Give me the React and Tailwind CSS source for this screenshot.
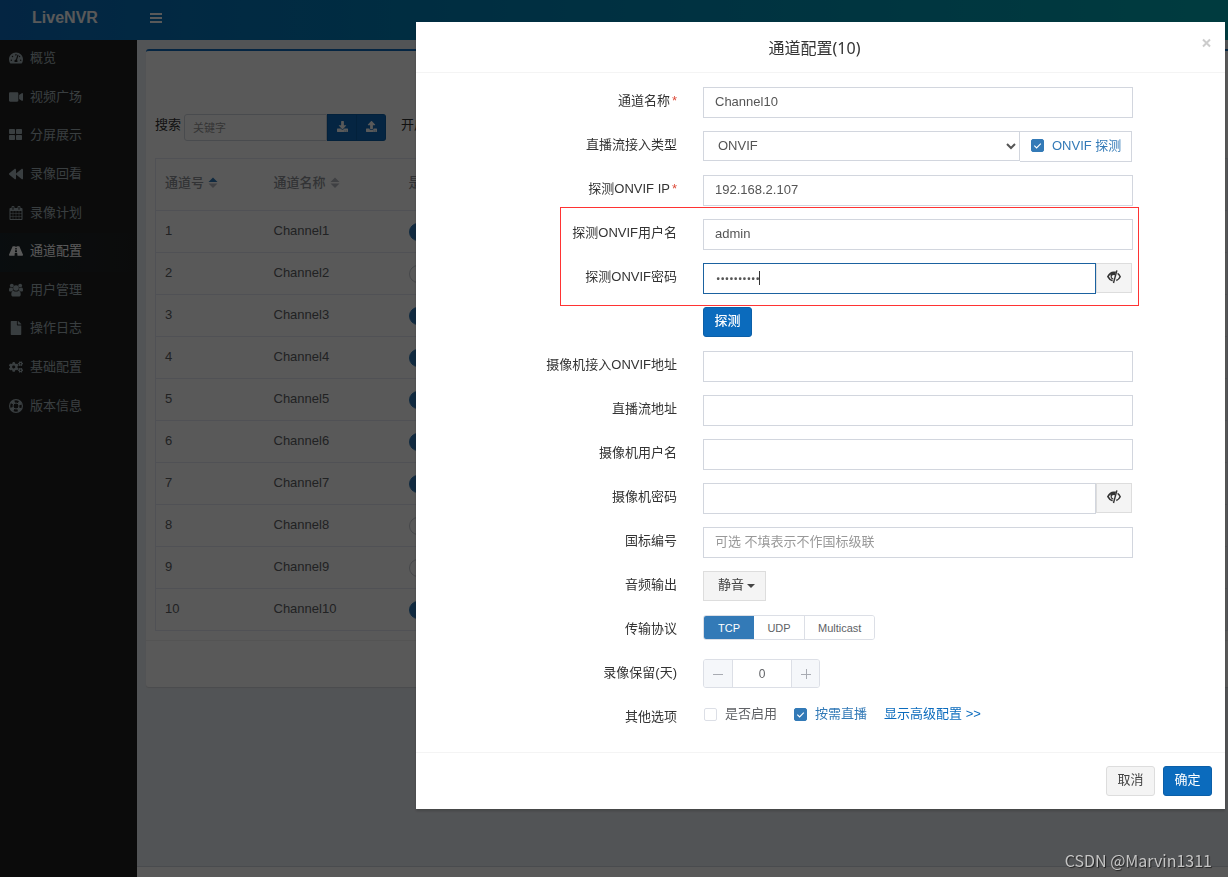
import React, { useState } from "react";
import {
  FaTachometerAlt, FaVideo, FaBackward, FaRoad, FaFile, FaCogs, FaDownload, FaUpload
} from "react-icons/fa";

const GridIcon = ({ className }) => (
  <svg viewBox="0 0 14 14" className={className} fill="currentColor" aria-hidden="true">
    <rect x="0" y="1" width="6" height="5" rx="0.8" />
    <rect x="7" y="1" width="6" height="5" rx="0.8" />
    <rect x="0" y="7" width="6" height="5" rx="0.8" />
    <rect x="7" y="7" width="6" height="5" rx="0.8" />
  </svg>
);

const CalendarIcon = ({ className }) => (
  <svg viewBox="0 0 1792 1792" className={className} fill="currentColor" aria-hidden="true">
    <path d="M192 1664h288v-288h-288v288zm352 0h320v-288h-320v288zm-352-352h288v-320h-288v320zm352 0h320v-320h-320v320zm-352-384h288v-288h-288v288zm736 736h320v-288h-320v288zm-384-736h320v-288h-320v288zm768 736h288v-288h-288v288zm-384-352h320v-320h-320v320zm-352-864v-288q0-13-9.5-22.5t-22.5-9.5h-64q-13 0-22.5 9.5t-9.5 22.5v288q0 13 9.5 22.5t22.5 9.5h64q13 0 22.5-9.5t9.5-22.5zm736 864h288v-320h-288v320zm-384-384h320v-288h-320v288zm384 0h288v-288h-288v288zm32-480v-288q0-13-9.5-22.5t-22.5-9.5h-64q-13 0-22.5 9.5t-9.5 22.5v288q0 13 9.5 22.5t22.5 9.5h64q13 0 22.5-9.5t9.5-22.5zm384-64v1280q0 52-38 90t-90 38h-1408q-52 0-90-38t-38-90v-1280q0-52 38-90t90-38h128v-96q0-66 47-113t113-47h64q66 0 113 47t47 113v96h384v-96q0-66 47-113t113-47h64q66 0 113 47t47 113v96h128q52 0 90 38t38 90z" />
  </svg>
);

const UsersIcon = ({ className }) => (
  <svg viewBox="0 0 14 14" className={className} fill="currentColor" aria-hidden="true">
    <circle cx="2.8" cy="2.6" r="1.9" />
    <circle cx="11.2" cy="2.6" r="1.9" />
    <circle cx="7" cy="5" r="2.8" />
    <path d="M0 7.2C0 5.4.5 4.5 1.3 4.5c.8.5 1.7.7 2.5.3-.1 1 .1 1.900.7 2.600-.9.1-1.600.5-2.100 1.100H1.300C.5 8.500 0 8 0 7.200z" />
    <path d="M14 7.2c0-1.800-.5-2.700-1.300-2.700-.8.500-1.700.700-2.500.300.100 1-.1 1.900-.7 2.600.9.100 1.600.5 2.100 1.100h1.100c.8 0 1.300-.5 1.300-1.300z" />
    <path d="M4.400 7.700c1.600 1.200 3.600 1.200 5.200 0 1.400.1 2.100 1.600 2.100 3.800 0 1.400-.8 2-2 2H4.300c-1.200 0-2-.6-2-2 0-2.200.7-3.700 2.100-3.800z" />
  </svg>
);

const LifeRingIcon = ({ className }) => (
  <svg viewBox="0 0 14 14" className={className} fill="none" stroke="currentColor" aria-hidden="true">
    <circle cx="7" cy="7" r="6.400" strokeWidth="1.200" />
    <circle cx="7" cy="7" r="3" strokeWidth="1" />
    <circle cx="7" cy="7" r="4.700" strokeWidth="3" strokeDasharray="3.400 3.982" strokeDashoffset="-1.991" />
  </svg>
);

const EyeCloseIcon = () => (
  <svg viewBox="0 0 14 14" className="size-3.5" fill="none" stroke="currentColor" aria-hidden="true">
    <path d="M8.4 2.6C4.6 1.8 2.2 4 .9 6.7c.8 1.7 2.3 3.4 4.7 4" strokeWidth="1.6" />
    <path d="M3.2 4.4C4.6 2.8 6.4 2 8.9 1.600L8 5.2 6 4.9 4.4 6.6z" fill="currentColor" stroke="none" />
    <path d="M4.2 5.4c-.4 1.9.4 3.2 2 3.7" strokeWidth="1.1" />
    <path d="M10.6 3.3c1.2.7 2 1.9 2.6 3.4-.8 1.7-2.1 3-3.9 3.8" strokeWidth="1.5" />
    <path d="M9.9.4 6.5 13" strokeWidth="1.4" />
  </svg>
);

const SortIcon = ({ active }) => (
  <svg viewBox="0 0 10 12" className="ml-1 inline-block h-3 w-2.5" aria-hidden="true">
    <path d="M5 0.5 9.5 5h-9z" fill={active ? "#337ab7" : "#b4b8c0"} />
    <path d="M5 11 .5 6.5h9z" fill="#b4b8c0" />
  </svg>
);

const MENU = [
  { text: "概览", Icon: FaTachometerAlt },
  { text: "视频广场", Icon: FaVideo },
  { text: "分屏展示", Icon: GridIcon },
  { text: "录像回看", Icon: FaBackward },
  { text: "录像计划", Icon: CalendarIcon },
  { text: "通道配置", Icon: FaRoad, active: true },
  { text: "用户管理", Icon: UsersIcon },
  { text: "操作日志", Icon: FaFile },
  { text: "基础配置", Icon: FaCogs },
  { text: "版本信息", Icon: LifeRingIcon },
];

const CHANNELS = [true, false, true, true, true, true, true, false, false, true];

const inputClass =
  "block h-[31px] w-full min-w-0 border border-[#d2d6de] bg-white pr-3 pb-0.5 pl-[11px] text-[13px] text-[#555] outline-none placeholder:text-[#999]";

const Row = ({ label, htmlFor, required, children }) => (
  <div className="mb-[13px] grid min-h-[31px] grid-cols-[261px_minmax(0,1fr)] gap-[26px] pr-[92px]">
    {label ? (
      <label htmlFor={htmlFor} className="pt-[5px] text-right leading-[18px] text-[#333]">
        {label}
        {required && <span className="ml-0.5 text-[#dd4b39]">*</span>}
      </label>
    ) : (
      <span />
    )}
    <div className="min-w-0">{children}</div>
  </div>
);

const CheckBox = ({ id, text, defaultChecked }) => (
  <label htmlFor={id} className="flex items-center gap-2 text-[#606266] has-checked:text-[#337ab7]">
    <span className="relative flex">
      <input
        id={id}
        type="checkbox"
        defaultChecked={defaultChecked}
        className="peer size-[13px] appearance-none rounded-xs border border-[#dcdfe6] bg-white checked:border-[#337ab7] checked:bg-[#337ab7]"
      />
      <svg viewBox="0 0 13 13" className="pointer-events-none absolute inset-0 hidden peer-checked:block" fill="none" stroke="#fff" aria-hidden="true">
        <path d="M3.3 6.7 5.6 9 9.8 4.6" strokeWidth="1.1" />
      </svg>
    </span>
    {text}
  </label>
);

const EyeButton = () => (
  <button type="button" aria-label="显示密码" className="flex h-[30px] w-9 shrink-0 justify-center border border-[#ddd] bg-[#f4f4f4] pt-1.5 text-[#333]">
    <EyeCloseIcon />
  </button>
);

const Sidebar = () => (
  <nav className="w-[137px] shrink-0 bg-[#222]">
    <ul className="flex h-[386px] flex-col">
      {MENU.map(({ text, Icon, active }) => (
        <li key={text} className="flex flex-1">
          <a
            href="#"
            className={`flex flex-1 items-center gap-[7px] pb-0.5 pl-[9px] ${active ? "bg-linear-to-r from-[#1c272b] to-[#222] text-white" : "text-[#a4b2b8]"}`}
          >
            <Icon className="size-3.5" />
            {text}
          </a>
        </li>
      ))}
    </ul>
  </nav>
);

const ChannelPanel = () => (
  <section className="mt-[9px] ml-[9px] rounded-l-[3px] border-t-2 border-[#0f6cbd] bg-white shadow-[0_1px_1px_rgba(0,0,0,0.1)]">
    <div className="pt-[63px] pb-[9px] pl-[9px]">
      <div className="mb-[17px] flex text-[#333]">
        <label htmlFor="keyword" className="mr-[3px] leading-[22px]">搜索</label>
        <input
          id="keyword"
          placeholder="关键字"
          className="h-[27px] w-[143px] rounded-l-[3px] border border-[#d2d6de] bg-white px-2 text-[11px] outline-none placeholder:text-[#999]"
        />
        <button type="button" aria-label="下载" className="flex h-[27px] w-[30px] items-center justify-center border border-[#0b5fa8] bg-[#0f6cbd] pb-0.5 text-white">
          <FaDownload className="size-[11px]" />
        </button>
        <button type="button" aria-label="上传" className="flex h-[27px] w-[29px] items-center justify-center rounded-r-[3px] border border-l-0 border-[#0b5fa8] bg-[#0f6cbd] pb-0.5 text-white">
          <FaUpload className="size-[11px]" />
        </button>
        <span className="ml-[15px] leading-[22px]">开启状态</span>
      </div>
      <table className="w-full table-fixed border-collapse border border-[#e6e9f2] text-left text-[#606266]">
        <thead>
          <tr className="h-[52px] border-b border-[#e6e9f2] text-[#909399]">
            <th className="w-[109px] pb-1 pl-[9px] font-medium">通道号<SortIcon active /></th>
            <th className="w-[135px] pb-1 pl-[9px] font-medium">通道名称<SortIcon /></th>
            <th className="pb-1 pl-[9px] font-medium">是否启用</th>
          </tr>
        </thead>
        <tbody>
          {CHANNELS.map((on, index) => (
            <tr key={index} className="h-[42px] border-b border-[#e6e9f2]">
              <td className="pb-0.5 pl-[9px]">{index + 1}</td>
              <td className="pb-0.5 pl-[9px]">Channel{index + 1}</td>
              <td className="pl-[9px]">
                <button
                  type="button"
                  role="switch"
                  aria-checked={on}
                  aria-label={`Channel${index + 1}`}
                  className={`block h-[18px] w-9 rounded-full border ${on ? "border-[#337ab7] bg-[#337ab7]" : "border-[#c8ccd4] bg-white"}`}
                />
              </td>
            </tr>
          ))}
        </tbody>
      </table>
    </div>
    <div className="h-[47px] border-t border-[#f0f0f0]" />
  </section>
);

const ChannelModal = () => {
  const [protocol, setProtocol] = useState("TCP");
  const [days, setDays] = useState(0);

  return (
    <div role="dialog" aria-label="通道配置" className="mt-[22px] mr-[3px] ml-[416px] bg-white shadow-[0_2px_3px_rgba(0,0,0,0.2)]">
      <div className="relative border-b border-[#f4f4f4] pt-3.5 pr-3 pb-3">
        <h4 className="text-center font-['Noto_Sans','Noto_Sans_CJK_SC',sans-serif] text-base leading-6 text-[#333]">通道配置(10)</h4>
        <button type="button" aria-label="关闭" className="absolute top-[15px] right-[13px] text-[#ccc]">
          <svg viewBox="0 0 11 11" className="size-[11px]" stroke="currentColor" strokeWidth="2" aria-hidden="true">
            <path d="M2 2.5 9 9.5M9 2.5 2 9.5" />
          </svg>
        </button>
      </div>

      <form className="pt-3.5 pb-[5px]" onSubmit={(e) => e.preventDefault()}>
        <Row label="通道名称" htmlFor="name" required>
          <input id="name" defaultValue="Channel10" className={inputClass} />
        </Row>
        <Row label="直播流接入类型" htmlFor="type">
          <div className="flex pr-px">
            <select id="type" className="h-[30px] min-w-0 flex-1 border border-[#d2d6de] bg-white pb-0.5 pl-2.5 text-[#555] outline-none">
              <option>ONVIF</option>
              <option>RTSP</option>
            </select>
            <div className="flex h-[31px] w-28 items-center border border-l-0 border-[#d2d6de] pb-0.5 pl-[11px]">
              <CheckBox id="probe" text="ONVIF 探测" defaultChecked />
            </div>
          </div>
        </Row>
        <Row label="探测ONVIF IP" htmlFor="ip" required>
          <input id="ip" defaultValue="192.168.2.107" className={inputClass} />
        </Row>

        <div className="relative flow-root">
          <div className="pointer-events-none absolute -top-3 right-[86px] bottom-px left-[144px] border border-[#f33]" />
          <Row label="探测ONVIF用户名" htmlFor="user">
            <input id="user" defaultValue="admin" className={inputClass} />
          </Row>
          <Row label="探测ONVIF密码" htmlFor="password">
            <div className="relative flex pr-px">
              <input
                id="password"
                type="password"
                defaultValue="admin12345"
                className="block h-[31px] min-w-0 flex-1 border border-[#1b62a0] bg-white px-3 font-[Roboto,sans-serif] text-[13px] text-[#555] outline-none"
              />
              <span className="absolute top-2 left-14 h-3.5 w-px bg-[#333]" />
              <EyeButton />
            </div>
          </Row>
        </div>

        <Row>
          <button type="button" className="h-[30px] w-[49px] rounded-[3px] border border-[#0b5fa8] bg-[#0b6bbd] pb-0.5 font-medium text-white">探测</button>
        </Row>
        <Row label="摄像机接入ONVIF地址" htmlFor="address">
          <input id="address" className={inputClass} />
        </Row>
        <Row label="直播流地址" htmlFor="stream">
          <input id="stream" className={inputClass} />
        </Row>
        <Row label="摄像机用户名" htmlFor="cameraUser">
          <input id="cameraUser" className={inputClass} />
        </Row>
        <Row label="摄像机密码" htmlFor="cameraPassword">
          <div className="flex pr-px">
            <input id="cameraPassword" type="password" className={inputClass} />
            <EyeButton />
          </div>
        </Row>
        <Row label="国标编号" htmlFor="code">
          <input id="code" placeholder="可选 不填表示不作国标级联" className={inputClass} />
        </Row>
        <Row label="音频输出" htmlFor="audio">
          <button id="audio" type="button" className="flex h-[30px] items-center gap-[3px] border border-[#ddd] bg-[#f4f4f4] pr-2.5 pb-0.5 pl-3.5 text-[#444]">
            静音
            <svg viewBox="0 0 8 4" className="mt-0.5 h-1 w-2" fill="currentColor" aria-hidden="true">
              <path d="M0 0h8L4 4z" />
            </svg>
          </button>
        </Row>
        <Row label="传输协议">
          <div className="inline-flex overflow-hidden rounded-[3px] border border-[#dcdfe6]">
            {["TCP", "UDP", "Multicast"].map((item, index) => (
              <button
                key={item}
                type="button"
                onClick={() => setProtocol(item)}
                className={`h-[23px] px-[13px] text-[11px] font-medium ${index === 2 ? "border-l border-[#dcdfe6]" : "min-w-[50px]"} ${protocol === item ? "bg-[#337ab7] text-white outline outline-[#337ab7]" : "bg-white text-[#606266]"}`}
              >
                {item}
              </button>
            ))}
          </div>
        </Row>
        <Row label="录像保留(天)" htmlFor="days">
          <div className="inline-flex h-[29px] overflow-hidden rounded-[3px] border border-[#dcdfe6] text-[#a8abb2]">
            <button type="button" aria-label="减少" onClick={() => setDays(Math.max(0, days - 1))} className="flex w-[29px] items-center justify-center border-r border-[#dcdfe6] bg-[#f5f7fa]">
              <svg viewBox="0 0 10 10" className="size-2.5" stroke="currentColor" aria-hidden="true">
                <path d="M0 5.5h10" />
              </svg>
            </button>
            <input id="days" value={days} onChange={(e) => setDays(Number(e.target.value) || 0)} className="w-[58px] bg-white text-center text-xs text-[#606266] outline-none" />
            <button type="button" aria-label="增加" onClick={() => setDays(days + 1)} className="flex w-7 items-center justify-center border-l border-[#dcdfe6] bg-[#f5f7fa]">
              <svg viewBox="0 0 10 10" className="size-2.5" stroke="currentColor" aria-hidden="true">
                <path d="M0 5.5h10M5.5 0v10" />
              </svg>
            </button>
          </div>
        </Row>
        <Row label="其他选项">
          <div className="flex items-center gap-[17px] pt-0.5 pl-px leading-[18px]">
            <CheckBox id="enabled" text="是否启用" />
            <CheckBox id="onDemand" text="按需直播" defaultChecked />
            <a href="#" className="text-[#0b6bbd]">显示高级配置 &gt;&gt;</a>
          </div>
        </Row>
      </form>

      <div className="flex justify-end gap-2 border-t border-[#f4f4f4] p-[13px]">
        <button type="button" className="h-[30px] w-[49px] rounded-[3px] border border-[#ddd] bg-[#f4f4f4] pb-0.5 text-[#444]">取消</button>
        <button type="button" className="h-[30px] w-[49px] rounded-[3px] border border-[#0b5fa8] bg-[#0b6bbd] pb-0.5 text-white">确定</button>
      </div>
    </div>
  );
};

export default function App() {
  return (
    <div className="flex min-h-screen flex-col overflow-hidden bg-[#ecf0f5] font-['Liberation_Sans','Noto_Sans_CJK_SC',sans-serif] text-[13px] leading-[18px]">
      <header className="flex h-10 items-center bg-linear-to-r from-[#0c6bbd] to-[#00aab4] pb-1 text-white">
        <a href="#" className="w-[130px] text-center text-base font-bold">LiveNVR</a>
        <button type="button" aria-label="菜单" className="ml-5">
          <svg viewBox="0 0 12 10" className="h-2.5 w-3" fill="currentColor" aria-hidden="true">
            <path d="M0 0h12v2H0zM0 4h12v2H0zM0 8h12v2H0z" />
          </svg>
        </button>
      </header>

      <div className="flex flex-1">
        <Sidebar />
        <div className="flex min-w-0 flex-1 flex-col">
          <main className="flex-1">
            <ChannelPanel />
          </main>
          <footer className="h-[11px] border-t border-[#d2d6de] bg-white" />
        </div>
      </div>

      {/* 弹窗 */}
      <div className="fixed inset-0 overflow-hidden bg-black/65">
        <ChannelModal />
        <span className="absolute right-4 bottom-[5px] font-['Noto_Sans_CJK_SC',sans-serif] text-base text-[#c4c4c4] [text-shadow:1px_1px_1px_#222]">
          CSDN @Marvin1311
        </span>
      </div>
    </div>
  );
}
